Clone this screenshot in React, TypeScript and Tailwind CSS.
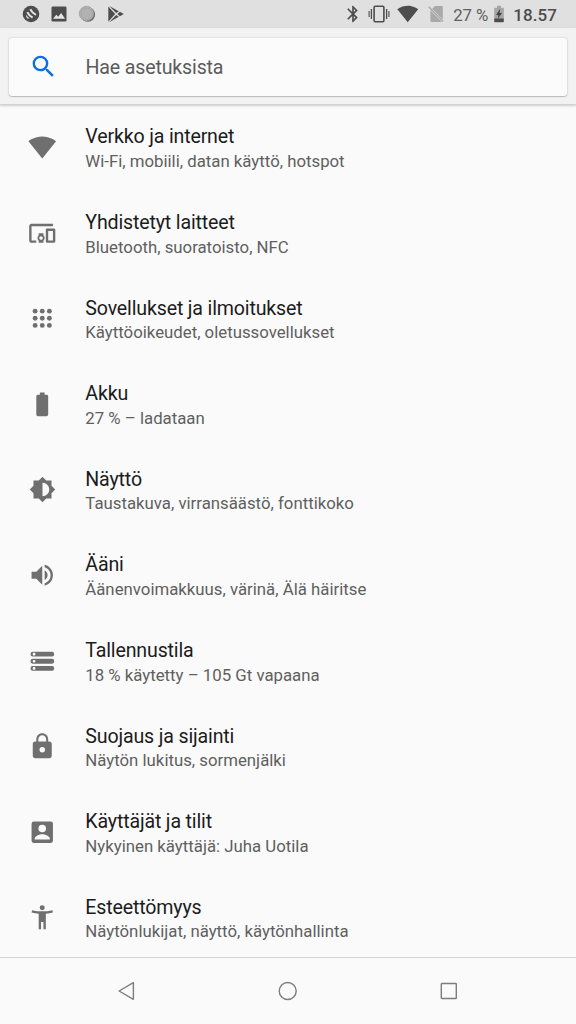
import React from 'react';
import { MdSearch, MdDevicesOther, MdBatteryFull, MdVolumeUp, MdBluetooth } from 'react-icons/md';

interface SettingsItem {
  title: string;
  summary: string;
  icon: React.ReactNode;
}

interface GlyphProps {
  className?: string;
  children: React.ReactNode;
}

// 24dp icon grid
function Glyph({ className = 'size-[28.5px]', children }: GlyphProps) {
  return (
    <svg viewBox="0 0 24 24" fill="currentColor" className={className}>
      {children}
    </svg>
  );
}

const WIFI_PATH = 'M12.01 21.49L23.64 7c-.45-.34-4.93-4-11.64-4C5.28 3 .81 6.66.36 7l11.63 14.49.01.01.01-.01z';

const items: SettingsItem[] = [
  {
    title: 'Verkko ja internet',
    summary: 'Wi-Fi, mobiili, datan käyttö, hotspot',
    icon: <Glyph><path d={WIFI_PATH} /></Glyph>,
  },
  {
    title: 'Yhdistetyt laitteet',
    summary: 'Bluetooth, suoratoisto, NFC',
    icon: <MdDevicesOther className="size-[28.5px]" />,
  },
  {
    title: 'Sovellukset ja ilmoitukset',
    summary: 'Käyttöoikeudet, oletussovellukset',
    icon: (
      <Glyph>
        {[6, 12, 18].map((y) => [6, 12, 18].map((x) => <circle key={`${x}-${y}`} cx={x} cy={y} r="2.05" />))}
      </Glyph>
    ),
  },
  {
    title: 'Akku',
    summary: '27 % – ladataan',
    icon: <MdBatteryFull className="size-[28.5px]" />,
  },
  {
    title: 'Näyttö',
    summary: 'Taustakuva, virransäästö, fonttikoko',
    icon: (
      <Glyph className="size-[27px]">
        <path d="M20 15.31L23.31 12 20 8.69V4h-4.69L12 .69 8.69 4H4v4.69L.69 12 4 15.31V20h4.69L12 23.31 15.31 20H20v-4.69zM12 18V6c3.31 0 6 2.69 6 6s-2.69 6-6 6z" />
      </Glyph>
    ),
  },
  {
    title: 'Ääni',
    summary: 'Äänenvoimakkuus, värinä, Älä häiritse',
    icon: <MdVolumeUp className="size-[28.5px]" />,
  },
  {
    title: 'Tallennustila',
    summary: '18 % käytetty – 105 Gt vapaana',
    icon: (
      <Glyph>
        {[4, 10, 16].map((y) => (
          <g key={y}>
            <rect x="2.2" y={y - 0.1} width="19.800" height="4.100" rx="1.700" />
            <rect x="4" y={y + 0.9} width="2.200" height="2.200" rx=".8" fill="#fafafa" />
          </g>
        ))}
      </Glyph>
    ),
  },
  {
    title: 'Suojaus ja sijainti',
    summary: 'Näytön lukitus, sormenjälki',
    icon: (
      <Glyph>
        <path d="M18 8h-1V6c0-2.760-2.240-5-5-5S7 3.240 7 6v2H6c-1.100 0-2 .9-2 2v10c0 1.100.9 2 2 2h12c1.100 0 2-.9 2-2V10c0-1.100-.9-2-2-2zM8.700 8V6.100c0-1.820 1.480-3.300 3.300-3.300s3.300 1.480 3.300 3.300V8z" />
        <circle cx="12" cy="15" r="2.300" fill="#fafafa" />
      </Glyph>
    ),
  },
  {
    title: 'Käyttäjät ja tilit',
    summary: 'Nykyinen käyttäjä: Juha Uotila',
    icon: (
      <Glyph>
        <rect x="3" y="3" width="18" height="18" rx="1.800" />
        <circle cx="12" cy="8.900" r="3.200" fill="#fafafa" />
        <path fill="#fafafa" d="M5.600 18v-.6c0-2.300 4-3.800 6.400-3.800s6.400 1.500 6.400 3.800v.6z" />
      </Glyph>
    ),
  },
  {
    title: 'Esteettömyys',
    summary: 'Näytönlukijat, näyttö, käytönhallinta',
    icon: (
      <Glyph>
        <circle cx="12" cy="4" r="2.100" />
        <path d="M20.500 6c-2.610.7-5.670 1-8.500 1s-5.890-.3-8.500-1L3 8c1.860.5 4 .83 6 1v13h2v-6h2v6h2V9c2-.17 4.140-.5 6-1l-.5-2z" />
      </Glyph>
    ),
  },
];

function StatusBar() {
  return (
    <div className="flex h-7 shrink-0 items-center justify-between bg-[#e0e0e0] pr-[19px] pl-[22px] text-[#4d4d4d]">
      <div className="flex items-center">
        <svg viewBox="0 0 18 18" className="size-[18px]">
          <circle cx="9" cy="9" r="8.300" fill="#4d4d4d" />
          <g fill="none" stroke="#e6e6e6" strokeWidth="2">
            <path d="M8.300 4.200q1.900 3.900 5.700 5.600" />
            <path d="M5.300 7.200q1.700 3.700 5.300 5.300" />
          </g>
          <path d="M4.300 9.700q1 2.300 3.300 3.500l-2.200.3q-1.700-1.400-1.100-3.800z" fill="#e6e6e6" />
        </svg>
        <svg viewBox="0 0 16 16" className="ml-[11px] size-4">
          <rect x=".5" y=".5" width="15" height="15" rx="1.200" fill="#4d4d4d" />
          <path d="M2 12.700l3.300-4 1.900 2.100 2.900-3.900 4 5.800z" fill="#e6e6e6" />
        </svg>
        <svg viewBox="0 0 18 18" className="ml-[11px] size-[18px]">
          <circle cx="9.900" cy="9.600" r="7.200" fill="#6a6a6a" />
          <circle cx="8.600" cy="8.600" r="7.300" fill="#b0b0b0" stroke="#8b8b8b" strokeWidth="1" strokeDasharray="1 1" />
          <circle cx="8.600" cy="8.600" r="5.600" fill="#b2b2b2" stroke="#9d9d9d" strokeWidth=".5" />
        </svg>
        <svg viewBox="0 0 18 18" className="ml-[11px] size-[18px]" fill="#4d4d4d">
          <path d="M1.300 1.400v15.400L8.200 9z" />
          <path d="M2.200.9l9.600 5.400L9.200 8.100zM2.200 17.200l9.600-5.500L9.200 9.900z" />
          <path d="M12.900 6.800L16.800 9l-3.900 2.200L10.300 9z" />
        </svg>
      </div>

      <div className="flex items-center">
        <MdBluetooth className="size-5" />
        <svg viewBox="0 0 22 18" className="ml-[5px] h-[18px] w-[22px]" fill="none" stroke="#4d4d4d">
          <rect x="6.100" y="1.300" width="9.800" height="15.400" rx="1.200" strokeWidth="1.600" />
          <path d="M3.400 4v10M18.600 4v10" strokeWidth="1.300" />
          <path d="M1.100 6v6M20.900 6v6" strokeWidth="1.100" />
        </svg>
        <Glyph className="ml-[7px] size-[21.5px]"><path d={WIFI_PATH} /></Glyph>
        <svg viewBox="0 0 16 18" className="ml-[10px] h-[18px] w-4">
          <path d="M7 1h6.500q1.300 0 1.300 1.300V14.500L4.200 3.800z" fill="#a9a9a9" />
          <path d="M2.400 5.300v10.400q0 1.300 1.300 1.300h10.200z" fill="#a9a9a9" />
          <path d="M.7 1.700L15.200 16.600" stroke="#a9a9a9" strokeWidth="1.400" />
        </svg>
        <span className="ml-[9px] text-[16.8px] leading-7 tracking-[-0.1px] text-[#5f5f5f]">
          <span className="relative top-px">27 %</span>
        </span>
        <svg viewBox="0 0 10 18" className="ml-[6px] h-[18px] w-[10px]">
          <path d="M3 .8h4v1.900h2.200q.6 0 .6.6v11H.2v-11q0-.6.6-.6H3z" fill="#a6a6a6" />
          <path d="M.2 13.500h9.600v3q0 .8-.8.8H1q-.8 0-.8-.8z" fill="#4d4d4d" />
          <path d="M6.200 3.800L2 9.900h2.400L3.800 13.800 8 7.900H5.600z" fill="#444" />
        </svg>
        <span className="ml-[9px] text-[17px] font-medium leading-7 tracking-[0.1px]">
          <span className="relative top-px">18.57</span>
        </span>
      </div>
    </div>
  );
}

function SearchHeader() {
  return (
    <div className="relative z-10 h-[77px] shrink-0 border-b border-[#d2d2d2] bg-[#f2f2f2] px-[9px] pt-[10px] shadow-[0_1px_2px_rgba(0,0,0,0.18)]">
      <div className="flex h-[57.5px] items-center rounded-[3px] bg-[#fbfbfb] pl-5 shadow-[0_0_2px_rgba(0,0,0,0.22),0_1px_1px_rgba(0,0,0,0.18)]">
        <MdSearch className="size-[29px] text-[#0b6fe0]" />
        <span className="ml-[27.5px] pt-0.5 text-[19.6px] tracking-[-0.16px] text-[#5b5b5b]">Hae asetuksista</span>
      </div>
    </div>
  );
}

function SettingsRow({ title, summary, icon }: SettingsItem) {
  return (
    <div className="flex h-[85.6px] shrink-0 items-center">
      <div className="flex w-[85.3px] shrink-0 justify-center pb-px text-[#6f6f6f]">{icon}</div>
      <div className="pt-[1.4px]">
        <div className="text-[19.6px] leading-[25.5px] tracking-[-0.16px] text-[#1c1c1c]">{title}</div>
        <div className="text-[16.8px] leading-[22.5px] text-[#5f5f5f]">{summary}</div>
      </div>
    </div>
  );
}

function NavBar() {
  return (
    <div className="flex h-[67px] shrink-0 items-center justify-between border-t border-[#d4d4d4] bg-[#fafafa] px-[115px] pb-px">
      <svg viewBox="0 0 24 24" className="size-6" fill="none" stroke="#7d7d7d" strokeWidth="1.400" strokeLinejoin="round">
        <path d="M18.400 3.700v16.600L4.100 12z" />
      </svg>
      <svg viewBox="0 0 24 24" className="size-6" fill="none" stroke="#7d7d7d" strokeWidth="1.400">
        <circle cx="11.700" cy="12" r="8.500" />
      </svg>
      <svg viewBox="0 0 24 24" className="size-6" fill="none" stroke="#7d7d7d" strokeWidth="1.400">
        <rect x="4.300" y="4.500" width="15" height="15" rx=".6" />
      </svg>
    </div>
  );
}

export default function App() {
  return (
    <div className="flex h-[1024px] w-[576px] flex-col overflow-hidden bg-[#fafafa] font-['Roboto',sans-serif]">
      <StatusBar />
      <SearchHeader />
      <div className="flex min-h-0 flex-1 flex-col overflow-hidden">
        {items.map((item) => (
          <SettingsRow key={item.title} {...item} />
        ))}
      </div>
      <NavBar />
    </div>
  );
}
